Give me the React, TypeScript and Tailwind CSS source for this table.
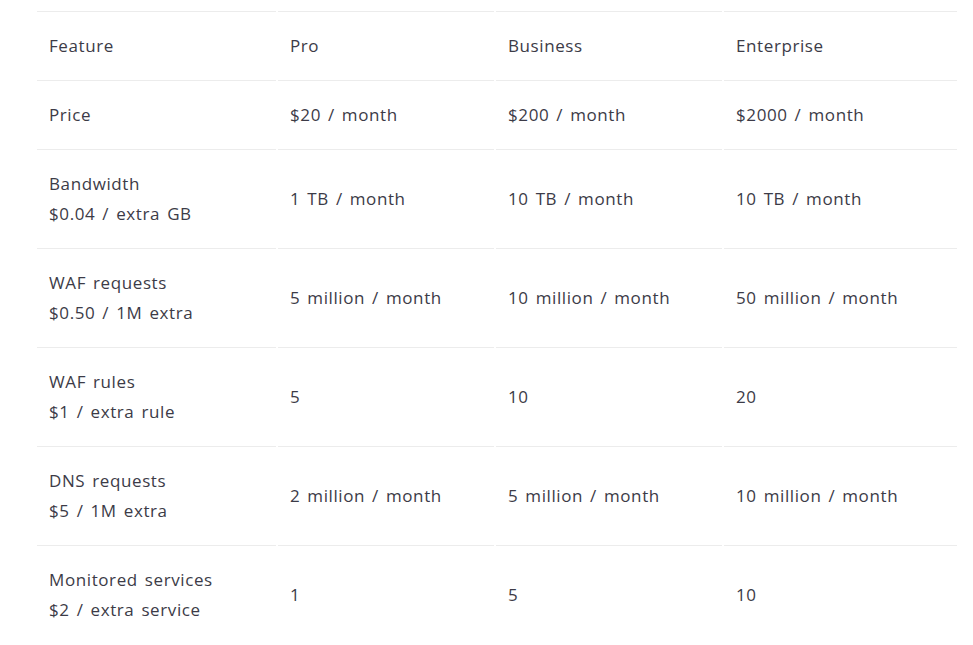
const rows: { label: string; extra?: string; cells: string[] }[] = [
  { label: "Price", cells: ["$20 / month", "$200 / month", "$2000 / month"] },
  { label: "Bandwidth", extra: "$0.04 / extra GB", cells: ["1 TB / month", "10 TB / month", "10 TB / month"] },
  { label: "WAF requests", extra: "$0.50 / 1M extra", cells: ["5 million / month", "10 million / month", "50 million / month"] },
  { label: "WAF rules", extra: "$1 / extra rule", cells: ["5", "10", "20"] },
  { label: "DNS requests", extra: "$5 / 1M extra", cells: ["2 million / month", "5 million / month", "10 million / month"] },
  { label: "Monitored services", extra: "$2 / extra service", cells: ["1", "5", "10"] },
];

const cell = "border-t border-[#ececec] px-3 py-[19px] text-left align-middle font-normal";

export default function App() {
  return (
    <div
      className="min-h-screen bg-white pl-[35px] pt-[11px] text-[17px] leading-[30px] tracking-[0.6px] [word-spacing:2px] text-[#3c3b47]"
      style={{ fontFamily: "'Open Sans', Lato, sans-serif" }}
    >
      <table className="table-fixed w-[924px] border-separate border-spacing-x-[2px] border-spacing-y-0">
        <colgroup>
          <col className="w-[239px]" />
          <col className="w-[216px]" />
          <col className="w-[226px]" />
          <col className="w-[233px]" />
        </colgroup>
        <thead>
          <tr>
            <th className={cell}>Feature</th>
            <th className={cell}>Pro</th>
            <th className={cell}>Business</th>
            <th className={cell}>Enterprise</th>
          </tr>
        </thead>
        <tbody>
          {rows.map((row) => (
            <tr key={row.label}>
              <td className={cell}>
                <div>{row.label}</div>
                {row.extra && <div>{row.extra}</div>}
              </td>
              {row.cells.map((c, i) => (
                <td key={i} className={cell}>
                  {c}
                </td>
              ))}
            </tr>
          ))}
        </tbody>
      </table>
    </div>
  );
}
